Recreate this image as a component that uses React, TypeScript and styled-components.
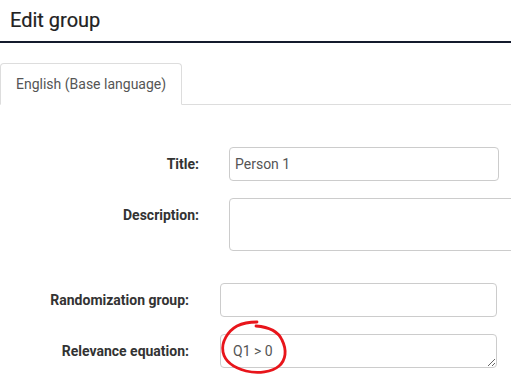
import React from "react";
import styled, { createGlobalStyle } from "styled-components";

const Global = createGlobalStyle`
  html, body { margin: 0; padding: 0; background: #fff; overflow: hidden; }
  body { font-family: Roboto, "Noto Sans", Arial, sans-serif; color: #333; }
  * { box-sizing: border-box; }
`;

const Page = styled.div`
  width: 511px;
  height: 383px;
  overflow: hidden;
`;

const Header = styled.div`
  height: 43px;
  border-bottom: 2px solid #141b2d;
  padding: 8px 10px 0;
`;

const Heading = styled.h1`
  margin: 0;
  font-size: 20px;
  font-weight: 400;
  line-height: 24px;
  color: #222;
  -webkit-text-stroke: 0.2px #222;
`;

const TabBar = styled.div`
  margin-top: 20px;
  display: flex;
  border-bottom: 1px solid #ddd;
  height: 42px;
`;

const Tab = styled.div`
  width: 182px;
  height: 42px;
  margin-bottom: -1px;
  border: 1px solid #ddd;
  border-bottom-color: #fff;
  border-radius: 4px 4px 0 0;
  background: #fff;
  padding: 0 0 0 15px;
  display: flex;
  align-items: center;
  font-size: 14px;
  color: #555;
`;

const Form = styled.div`
  display: flex;
  flex-direction: column;
  padding-top: 42px;
`;

const Group = styled.div<{ $gapAfter?: number }>`
  display: flex;
  flex-direction: column;
  gap: 17px;
  margin-bottom: ${(p) => p.$gapAfter ?? 0}px;
`;

const Row = styled.div<{ $labelWidth: number; $gap: number }>`
  display: grid;
  grid-template-columns: ${(p) => p.$labelWidth}px auto;
  column-gap: ${(p) => p.$gap}px;
  align-items: start;
`;

const Label = styled.label`
  text-align: right;
  font-weight: 700;
  font-size: 14px;
  line-height: 20px;
  padding-top: 7px;
  color: #333;
`;

const Field = styled.div`
  position: relative;
`;

const TextInput = styled.input<{ $width: number; $padX: number }>`
  display: block;
  width: ${(p) => p.$width}px;
  height: 34px;
  padding: 6px ${(p) => p.$padX}px;
  border: 1px solid #ccc;
  border-radius: 4px;
  font-family: Roboto, "Noto Sans", Arial, sans-serif;
  font-size: 14px;
  color: #555;
  background: #fff;
  outline: none;
`;

const TextArea = styled.textarea<{ $width: number; $height: number }>`
  display: block;
  width: ${(p) => p.$width}px;
  height: ${(p) => p.$height}px;
  padding: 6px 12px;
  border: 1px solid #ccc;
  border-radius: 4px;
  font-family: Roboto, "Noto Sans", Arial, sans-serif;
  font-size: 14px;
  line-height: 20px;
  color: #555;
  background: #fff;
  outline: none;
  resize: vertical;
  overflow: hidden;
`;

const Scribble = styled.svg`
  position: absolute;
  left: 0;
  top: -14px;
  width: 70px;
  height: 60px;
  overflow: visible;
  pointer-events: none;
`;

export default function App() {
  return (
    <Page>
      <Global />
      <Header>
        <Heading>Edit group</Heading>
      </Header>
      <TabBar>
        <Tab>English (Base language)</Tab>
      </TabBar>
      <Form>
        <Group $gapAfter={32}>
          <Row $labelWidth={199} $gap={30}>
            <Label>Title:</Label>
            <TextInput $width={270} $padX={5} defaultValue="Person 1" />
          </Row>
          <Row $labelWidth={199} $gap={30}>
            <Label>Description:</Label>
            <TextArea $width={320} $height={53} defaultValue="" />
          </Row>
        </Group>
        <Group>
          <Row $labelWidth={189} $gap={31}>
            <Label>Randomization group:</Label>
            <TextInput $width={277} $padX={12} defaultValue="" />
          </Row>
          <Row $labelWidth={189} $gap={31}>
            <Label>Relevance equation:</Label>
            <Field>
              <TextArea $width={277} $height={34} defaultValue="Q1 > 0" />
              <Scribble viewBox="220 320 70 60">
                <path
                  d="M256 326 C268 327, 278 331, 282 340 C287 350, 286 360, 279 366 C272 372, 258 374, 246 371 C235 368, 225 362, 223 352 C221 342, 228 331, 237 326 C243 323, 250 322, 257 322"
                  fill="none"
                  stroke="#e8151b"
                  strokeWidth="2.8"
                  strokeLinecap="round"
                  strokeLinejoin="round"
                />
              </Scribble>
            </Field>
          </Row>
        </Group>
      </Form>
    </Page>
  );
}
